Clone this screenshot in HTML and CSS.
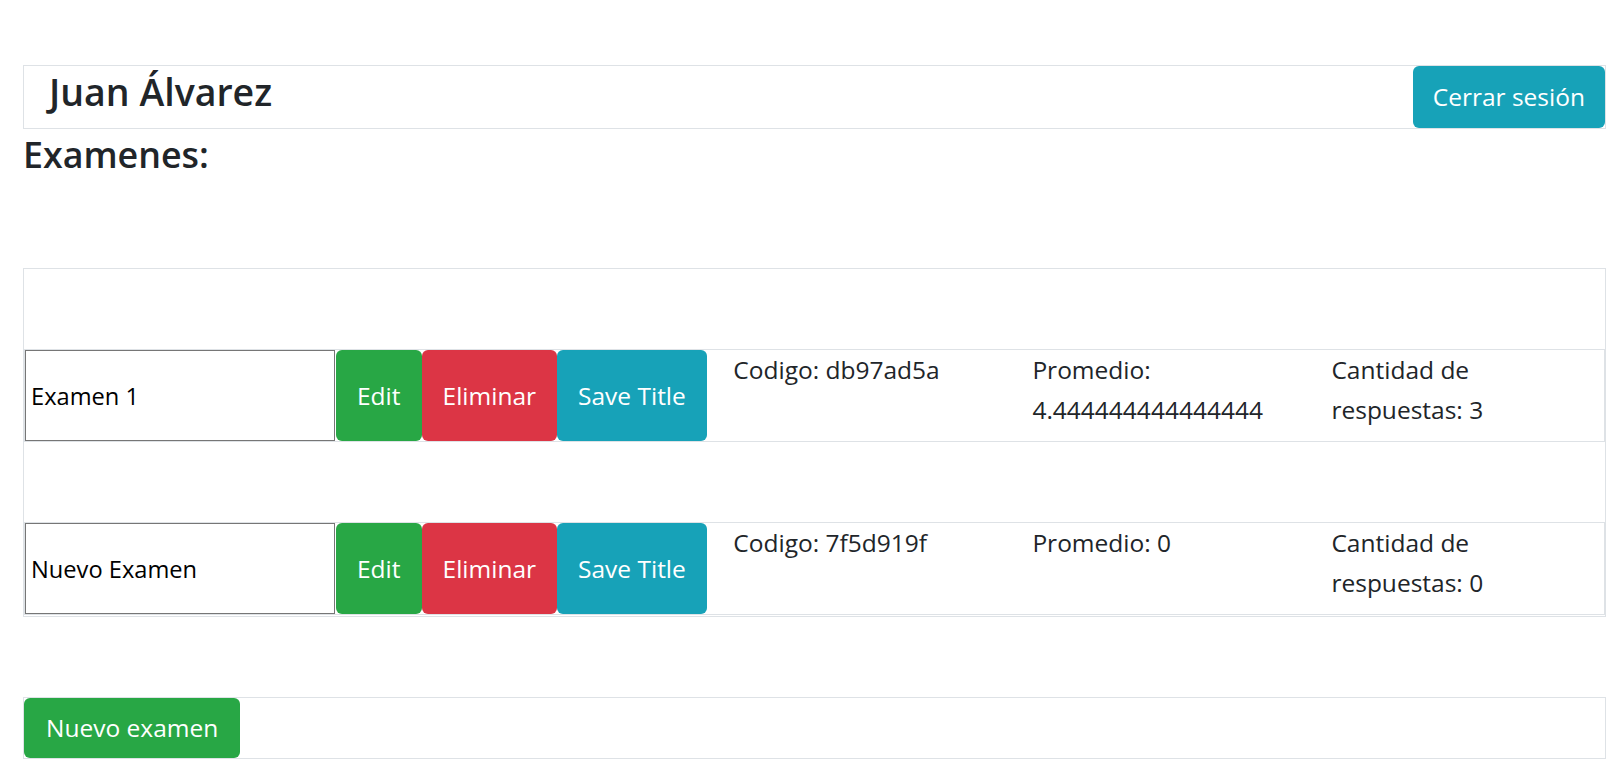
FILE: index.html
```html
<!DOCTYPE html>
<html lang="es">
<head>
<meta charset="utf-8">
<title>Examenes</title>
<link rel="stylesheet" href="styles.css">
</head>
<body>
<div class="page">
  <header class="user-bar">
    <h3 class="user-name">Juan Álvarez</h3>
    <button class="btn btn-info btn-logout">Cerrar sesión</button>
  </header>
  <h4 class="section-title">Examenes:</h4>
  <div class="exam-list">
    <div class="exam-row">
      <input class="exam-title" type="text" value="Examen 1">
      <button class="btn btn-success">Edit</button>
      <button class="btn btn-danger">Eliminar</button>
      <button class="btn btn-info">Save Title</button>
      <div class="exam-cell">Codigo: db97ad5a</div>
      <div class="exam-cell">Promedio: 4.444444444444444</div>
      <div class="exam-cell">Cantidad de respuestas: 3</div>
    </div>
    <div class="exam-row">
      <input class="exam-title" type="text" value="Nuevo Examen">
      <button class="btn btn-success">Edit</button>
      <button class="btn btn-danger">Eliminar</button>
      <button class="btn btn-info">Save Title</button>
      <div class="exam-cell">Codigo: 7f5d919f</div>
      <div class="exam-cell">Promedio: 0</div>
      <div class="exam-cell">Cantidad de respuestas: 0</div>
    </div>
  </div>
  <div class="footer-bar">
    <button class="btn btn-success btn-new">Nuevo examen</button>
  </div>
</div>
</body>
</html>
```
FILE: styles.css
```css
* { box-sizing: border-box; }
html, body { margin: 0; background: #fff; }
body {
  font-family: "Open Sans", "Noto Sans", sans-serif;
  color: #212529;
  font-size: 24.5px;
  line-height: 40px;
}
.page {
  padding: 65px 5px 0 23px;
}
.user-bar {
  display: flex;
  justify-content: space-between;
  align-items: stretch;
  height: 64px;
  border: 1px solid #dee2e6;
}
.user-name {
  margin: 3px 0 0 0;
  padding-left: 25px;
  font-size: 37.5px;
  line-height: 45px;
  font-weight: 600;
  color: #212529;
}
.section-title {
  margin: 4px 0 0 0;
  font-size: 35.8px;
  line-height: 43px;
  font-weight: 600;
  color: #212529;
}
.btn {
  font-family: "Open Sans", "Noto Sans", sans-serif;
  font-size: 24.5px;
  line-height: 36px;
  font-weight: 400;
  color: #fff;
  border: none;
  border-radius: 6px;
  padding: 0 21px;
  margin: 0;
  cursor: pointer;
}
.btn-success { background: #28a745; }
.btn-danger { background: #dc3545; }
.btn-info { background: #17a2b8; }
.btn-logout { padding: 0 20px; }
.exam-list {
  margin-top: 92px;
  border: 1px solid #dee2e6;
  padding-bottom: 1px;
}
.exam-row {
  display: flex;
  align-items: stretch;
  height: 93px;
  margin-top: 80px;
  border: 1px solid #dee2e6;
}
.exam-title {
  width: 310px;
  margin: 0 1px 0 0;
  padding: 0 5px;
  border: 1px solid #767676;
  border-radius: 0;
  font-family: "Open Sans", "Noto Sans", sans-serif;
  font-size: 23.65px;
  color: #000;
  background: #fff;
  outline: none;
}
.exam-cell {
  flex: 1 1 0;
  padding: 0 24px 0 26.5px;
  min-width: 0;
}
.footer-bar {
  display: flex;
  height: 62px;
  margin-top: 80px;
  border: 1px solid #dee2e6;
}
.btn-new { padding: 0 22px; }
```
